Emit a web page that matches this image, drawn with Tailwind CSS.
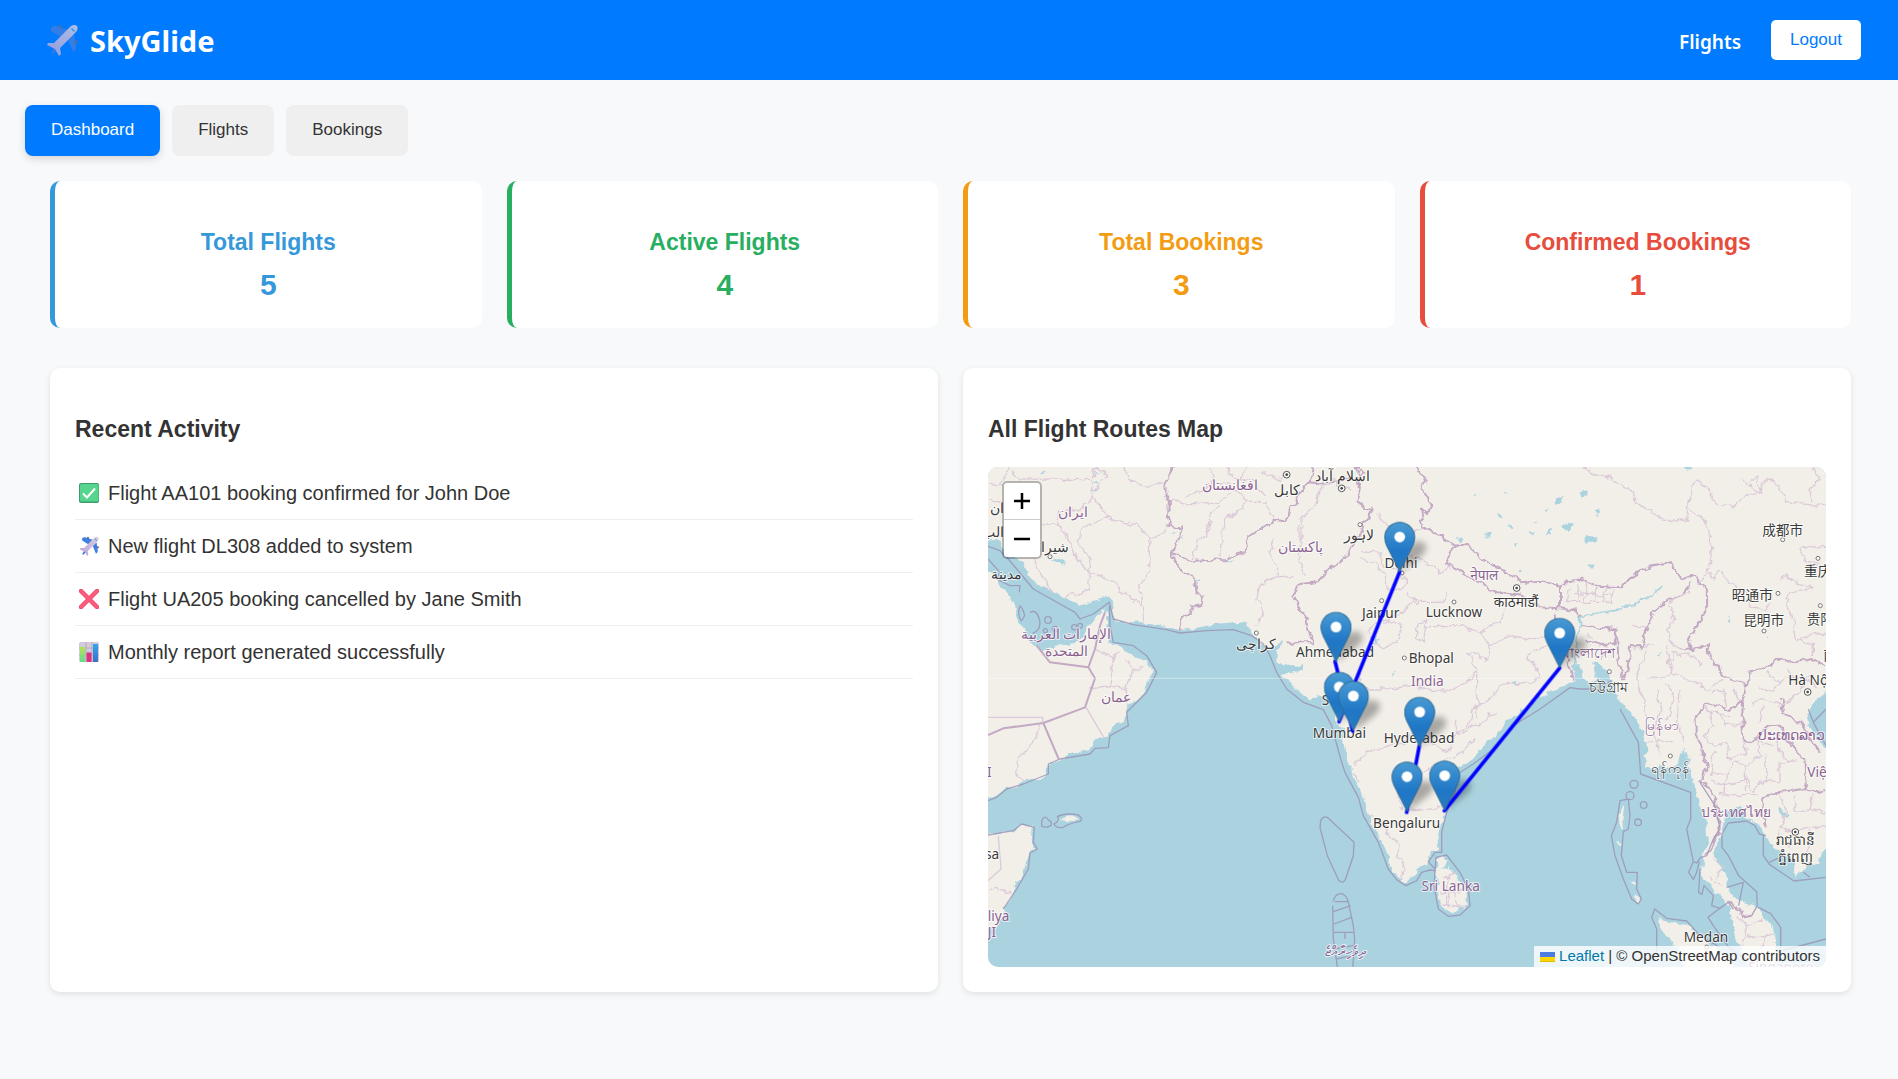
<!DOCTYPE html>
<html lang="en">
<head>
<meta charset="utf-8">
<meta name="viewport" content="width=device-width, initial-scale=1">
<title>SkyGlide</title>
<script src="https://cdn.jsdelivr.net/npm/@tailwindcss/browser@4"></script>
</head>
<body class="min-h-screen bg-[#f8f9fb] font-['Liberation_Sans',Arial,sans-serif] text-[#333]">

<svg class="absolute size-0" aria-hidden="true">
  <defs>
    <linearGradient id="fuselage" x1="0" y1="1" x2="1" y2="0"><stop offset="0" stop-color="#b9a3d6"/><stop offset="1" stop-color="#d9cfe0"/></linearGradient>
    <linearGradient id="pinFill" x1="0" y1="0" x2="0" y2="1"><stop offset="0" stop-color="#4a9bd3"/><stop offset=".6" stop-color="#1f77c6"/><stop offset="1" stop-color="#2a7bc0"/></linearGradient>
  </defs>
  <symbol id="plane" viewBox="0 0 32 32">
    <path fill="#3f7fe0" d="M5 4c1-2 3-2 5-2l12 4-6 8L5 7zM28 10l2 13c0 3-1 4-3 5l-5-12z"/>
    <path fill="#2f7fe8" d="M9 22l4 2-6 6-2-1z"/>
    <path fill="#5d6f9c" d="M13 1l3 1v3l-3-1zM31 16l1 3-3 1-1-3z"/>
    <path fill="url(#fuselage)" d="M24 3c3-3 6-2 7-1 1 2 1 4-2 7L14 24l1 6-2 2-4-7-8-4 1-2 6 0z"/>
    <path fill="#3d9be6" d="M26 4l3 3-1 1-3-3z"/>
  </symbol>
  <symbol id="pin" viewBox="0 0 25 41">
    <path fill="url(#pinFill)" stroke="#2e6c97" stroke-width=".8" d="M12.5.5C5.9.5.5 5.9.5 12.5c0 2.6 1 5.300 1.700 6.800L12.500 39.800l10.300-20.500c.7-1.500 1.700-4.200 1.700-6.800C24.500 5.900 19.100.5 12.500.5z"/>
    <circle cx="12.500" cy="12.200" r="4.300" fill="#fff"/>
  </symbol>
</svg>

<header class="flex h-20 items-center justify-between bg-[#007bff] px-[37px] font-['Noto_Sans','Open_Sans',sans-serif] text-white">
  <div class="flex items-center gap-3 pl-[9px]">
    <svg class="size-8 opacity-80" aria-hidden="true"><use href="#plane"/></svg>
    <span class="pt-0.5 text-[29px] leading-10 font-bold">SkyGlide</span>
  </div>
  <nav class="flex items-center gap-[30px]">
    <a href="#" class="pt-1 text-[19px] font-semibold">Flights</a>
    <button class="h-10 rounded-[5px] bg-white px-[19px] font-['Liberation_Sans',Arial,sans-serif] text-[17px] text-[#007bff]">Logout</button>
  </nav>
</header>

<div class="flex gap-3 px-[25px] pt-[25px]">
  <button class="h-[51px] rounded-lg bg-[#007bff] px-[26px] pb-0.5 text-[17px] text-white shadow-[0_3px_8px_rgba(0,0,0,0.15)]">Dashboard</button>
  <button class="h-[51px] rounded-lg bg-[#efefef] px-[26px] pb-0.5 text-[17px]">Flights</button>
  <button class="h-[51px] rounded-lg bg-[#efefef] px-[26px] pb-0.5 text-[17px]">Bookings</button>
</div>

<main class="pt-[25px] pr-[47px] pb-[50px] pl-[50px]">
  <section class="grid grid-cols-4 gap-[25px] text-center font-bold">
    <div class="rounded-[10px] border-l-[5px] border-[#3498db] bg-white px-[25px] pt-12 pb-[26px] text-[#3498db]">
      <h3 class="mb-3 text-[23px] leading-[27px]">Total Flights</h3>
      <p class="text-[30px] leading-[34px]">5</p>
    </div>
    <div class="rounded-[10px] border-l-[5px] border-[#27ae60] bg-white px-[25px] pt-12 pb-[26px] text-[#27ae60]">
      <h3 class="mb-3 text-[23px] leading-[27px]">Active Flights</h3>
      <p class="text-[30px] leading-[34px]">4</p>
    </div>
    <div class="rounded-[10px] border-l-[5px] border-[#f39c12] bg-white px-[25px] pt-12 pb-[26px] text-[#f39c12]">
      <h3 class="mb-3 text-[23px] leading-[27px]">Total Bookings</h3>
      <p class="text-[30px] leading-[34px]">3</p>
    </div>
    <div class="rounded-[10px] border-l-[5px] border-[#e74c3c] bg-white px-[25px] pt-12 pb-[26px] text-[#e74c3c]">
      <h3 class="mb-3 text-[23px] leading-[27px]">Confirmed Bookings</h3>
      <p class="text-[30px] leading-[34px]">1</p>
    </div>
  </section>

  <section class="mt-10 grid grid-cols-2 gap-[25px]">
    <div class="rounded-[10px] bg-white px-[25px] pt-12 pb-[25px] shadow-[0_2px_6px_rgba(0,0,0,0.1)]">
      <h3 class="mb-6 text-[23px] leading-[27px] font-bold">Recent Activity</h3>
      <ul class="text-xl leading-6">
        <li class="flex items-center gap-[9px] border-b border-[#eee] py-3.5 pl-1">
          <svg class="size-5" viewBox="0 0 20 20" aria-hidden="true"><rect width="20" height="20" rx="2" fill="#3f9a6c"/><rect x="1" y="1" width="18.500" height="17.500" rx="1.500" fill="#55d58e"/><path d="M4 10.500l4 4 8-9" fill="none" stroke="#fff" stroke-width="2"/></svg>
          <span>Flight AA101 booking confirmed for John Doe</span>
        </li>
        <li class="flex items-center gap-[9px] border-b border-[#eee] py-3.5 pl-1">
          <svg class="size-5" aria-hidden="true"><use href="#plane"/></svg>
          <span>New flight DL308 added to system</span>
        </li>
        <li class="flex items-center gap-[9px] border-b border-[#eee] py-3.5 pl-1">
          <svg class="size-5" viewBox="0 0 20 20" aria-hidden="true"><path d="M2 2l16 16M18 2L2 18" fill="none" stroke="#e8436b" stroke-width="4.500" stroke-linecap="round"/><path d="M2 2l16 16M18 2L2 18" fill="none" stroke="#ff5c7c" stroke-width="3" stroke-linecap="round"/></svg>
          <span>Flight UA205 booking cancelled by Jane Smith</span>
        </li>
        <li class="flex items-center gap-[9px] border-b border-[#eee] py-3.5 pl-1">
          <svg class="size-5" viewBox="0 0 20 20" aria-hidden="true"><defs><linearGradient id="barGreen" x1="0" y1="0" x2="0" y2="1"><stop offset="0" stop-color="#b4e34f"/><stop offset="1" stop-color="#63dc92"/></linearGradient><linearGradient id="barBlue" x1="0" y1="0" x2="0" y2="1"><stop offset="0" stop-color="#2fa8ee"/><stop offset="1" stop-color="#3f6fc4"/></linearGradient></defs><rect width="20" height="20" rx="1.500" fill="#d3cbdc"/><path d="M0 6h20M0 13h20M7 0v20M13 0v20" stroke="#b5abc2"/><rect x="1" y="5" width="5" height="15" fill="url(#barGreen)"/><rect x="7.500" y="10.500" width="5" height="9.500" fill="#e0317c"/><rect x="14" y="2" width="5" height="18" fill="url(#barBlue)"/></svg>
          <span>Monthly report generated successfully</span>
        </li>
      </ul>
    </div>

    <div class="rounded-[10px] bg-white px-[25px] pt-12 pb-[25px] shadow-[0_2px_6px_rgba(0,0,0,0.1)]">
      <h3 class="mb-6 text-[23px] leading-[27px] font-bold">All Flight Routes Map</h3>
      <div class="relative h-[500px] overflow-hidden rounded-[10px] bg-[#aad3df]">
        <svg class="block size-full font-['Noto_Sans','Noto_Sans_CJK_SC',sans-serif]" viewBox="24 24 2514 1500" preserveAspectRatio="xMidYMid slice" role="img" aria-label="Flight routes over South Asia">
          <defs>
            <filter id="rough" x="0" y="0" width="100%" height="100%"><feTurbulence type="fractalNoise" baseFrequency=".035" numOctaves="3" seed="4"/><feDisplacementMap in="SourceGraphic" scale="26" xChannelSelector="R" yChannelSelector="G"/></filter>
            <filter id="soft" x="-50%" y="-50%" width="200%" height="200%"><feGaussianBlur stdDeviation="9"/></filter>
          </defs>

          <g filter="url(#rough)">
            <!-- land -->
            <g fill="#f2efe9">
              <path d="M0 0H2560V700L2538 700 2510 722 2490 750 2480 770 2485 800 2510 840 2560 890V1170L2538 1170 2510 1210 2470 1230 2440 1250 2445 1210 2410 1180 2380 1170 2360 1130 2340 1095 2300 1080 2280 1040 2240 1060 2235 1090 2220 1130 2205 1180 2210 1210 2240 1250 2250 1305 2280 1330 2320 1340 2350 1370 2375 1400 2385 1440V1540H2310L2290 1490 2270 1440 2260 1390 2250 1350 2230 1320 2200 1290 2165 1260 2170 1200 2180 1150 2180 1090 2160 1040 2140 970 2125 900 2105 875 2090 920 2060 925 2030 920 1995 930 2000 850 1980 800 1940 750 1915 720 1895 670 1880 630 1860 625 1850 660 1830 675 1800 660 1775 670 1740 685 1700 700 1670 728 1620 755 1580 790 1550 830 1510 860 1480 905 1440 920 1415 950 1396 1000 1395 1050 1390 1080 1375 1130 1380 1175 1360 1180 1345 1200 1340 1220 1310 1230 1300 1255 1275 1270 1255 1255 1235 1230 1215 1170 1190 1120 1160 1060 1140 990 1115 940 1095 880 1085 810 1060 750 1050 700 1040 690 1030 715 990 718 950 695 920 665 905 645 930 640 965 630 970 615 920 620 890 600 890 580 910 550 870 560 850 555 830 535 815 520 800 490 740 495 680 500 600 515 560 500 480 492 410 485 395 455 400 430 385 415 340 425 300 440 240 410 215 395 160 370 145 345 130 305 90 295 60 250 0 250z"/>
              <path d="M0 320L24 330 60 380 85 410 105 440 115 490 140 530 165 560 190 572 250 562 300 545 330 500 365 455 385 455 380 500 390 545 430 570 470 590 510 620 520 640 495 680 480 720 445 740 435 790 400 800 385 835 340 845 325 875 290 880 235 900 205 920 195 950 130 970 80 990 45 1015 0 1020z"/>
              <path d="M0 1130L24 1128 100 1115 125 1097 158 1105 155 1150 165 1170 145 1185 140 1220 120 1260 100 1290 90 1320 70 1350 62 1390 35 1405 0 1430zM235 1080L262 1066 302 1078 270 1090z"/>
              <path d="M1368 1200L1392 1196 1430 1250 1460 1300 1460 1340 1410 1365 1380 1340 1370 1270z"/>
              <path d="M2035 1380L2080 1390 2130 1400 2180 1450 2240 1490 2270 1540H2120L2080 1450 2040 1415z"/>
              <path d="M1925 1040l10 0 -5 40 -8 30 -6 0zM1912 1150l6 0 0 14 -6 0zM1955 1265l8 0 0 12 -8 0zM1966 1310l10 0 0 20 -10 0z"/>
            </g>
            <!-- lakes, rivers and shallows -->
            <g fill="#aad3df">
              <path d="M180 40l15-2-4 8zM340 70l16-3 0 8zM335 90l14 2-6 6zM340 45l22-8-4 10zM220 298l18-4 20 14-8 12-14-10zM1730 120l24-10-8 20-14 6zM1745 200l20-14 18 10-14 22-20-4zM1820 232l34 0-14 16-20 0zM1822 318l24-6-12 18zM1640 215l24 4 0 12zM1430 238l20 0-8 10zM1690 225l30-18-8 22zM1510 225l22-6-6 16zM1550 170l14 0-4 8zM1480 100l12 0-8 8zM1605 255l10 4-6 8zM2110 24l34 0-20 8zM1845 160l14-6-4 18zM2035 588l10-6 0 8zM2395 1045l34 24-8 8-30-24z"/>
              <path d="M1395 1205l20-6-8 28-22 6zM1775 620l10 50 20 0-6-60zM1840 610l30 6 0 50-26-14z"/>
              <path d="M1235 644l12-6-6 16zM1600 670l10-5 3 14zM900 626l60-4 10 12-44 8z"/>
              <path d="M575 225l12-2-2 6zM600 235l16-4-6 8zM640 364l26-2 0 6zM625 350l16 0-2 5zM730 306l34-2-4 6zM474 398l14-2-4 8zM565 150l10 4-6 6zM1570 95l12 4-4 6zM1690 150l14-2-8 8zM1660 190l12-4 0 8zM1800 100l20-6 4 12-18 6zM1585 205l14-4 0 6zM1620 330l5 12-6 0zM2245 470l6 14-6 4zM2355 528l6 10-6 6zM1190 535l10 6-8 10z"/>
            </g>
            <path fill="none" stroke="#aad3df" stroke-width="5" d="M1800 470q100-14 130-20t120-66M1800 470q-4 80-14 150M1900 770q20 30 30 60M2110 870q4 60 22 120"/>

            <!-- country borders -->
            <g fill="none" stroke="#c3a9c3" stroke-width="6" stroke-linejoin="round">
              <path d="M575 24L570 45 555 70 560 110 570 125 565 200 605 205 600 240 570 280 640 305 740 300 800 275 805 230 850 205 880 185 920 190 930 150 960 100 985 70 1000 24M570 280L600 330 645 360 650 400 668 410 665 435 635 440 630 465 605 480 598 520"/>
              <path d="M1130 60L1140 100 1130 130 1180 155 1150 190 1140 230 1090 300 1050 330 1010 370 960 375 940 410 960 450 980 480 1000 550 920 550M1130 60L1150 40 1130 24M1130 24L1140 90M985 70Q1060 80 1110 60M1310 24L1335 60 1325 90 1360 140 1345 165 1320 155 1330 200 1380 230 1425 260 1395 310 1440 340 1500 370 1550 400 1620 410 1680 445 1740 448M1425 260L1460 255 1500 290 1560 330 1620 370 1680 365 1740 380 1740 448M1740 380L1760 370 1800 365 1850 380 1920 385 1960 345 2010 320 2070 310 2090 335 2110 360 2135 350 2160 370 2180 400 2182 450 2150 500 2130 545 2135 570M1740 448L1790 458 1800 470"/>
              <path d="M1730 460L1735 530 1760 560 1765 620 1780 665M1800 498L1880 510 1910 515 1900 560 1860 560 1810 545M1910 515L1915 600 1925 655 1945 640 1950 565 1985 565 2000 510 2020 460 2060 425 2110 405 2130 370"/>
              <path d="M2110 575L2185 560 2190 600 2215 620 2225 650 2300 680 2310 640 2345 630 2400 600 2440 610 2500 600 2538 620M2300 680L2290 730 2250 750 2180 730 2150 770 2150 840 2170 880 2180 920 2160 960 2200 1010 2220 1100 2200 1150 2180 1190M2290 730L2285 770 2290 840 2310 850 2370 800 2400 800 2440 870 2470 900 2475 990 2390 1000 2350 1020 2345 1070 2360 1100M2400 720L2410 760 2460 790 2520 880M2475 990L2510 1000 2538 990M2245 1330L2280 1350 2290 1375 2315 1370"/>
            </g>

            <!-- state and province borders -->
            <g fill="none" stroke="#dccad9" stroke-width="4" stroke-linejoin="round">
              <path d="M60 70L90 24M100 24L110 55 150 60 340 62 345 24M340 62L335 110 385 175 300 210 295 250 330 300 325 340 400 360 420 400 490 445 495 495M335 110L300 150 235 160 235 195 190 195M235 195L270 245 290 300 330 340 330 390 250 415M385 175L470 200 510 245 505 340 480 380 485 440M510 245L565 210M435 24L440 60 500 80 550 75M24 70L70 75M24 125L70 125M160 300L190 350 215 400M345 24Q390 40 370 70L340 95"/>
              <path d="M610 110L670 100 700 60 690 24M700 60L760 90 800 130 770 165 740 170 730 220 722 295M720 140L690 165 680 230 650 250 640 300M800 130L860 130 880 180M570 125L620 135 720 130 750 100M830 500L850 460 830 420 840 380 880 355 940 350M900 350L870 280 880 240M960 250L960 180 1010 140 1020 90 1060 60 1080 90 1110 90M850 40L890 60 930 40M780 60L800 24M740 24L770 60 820 70 860 110M970 200L960 280 970 350"/>
              <path d="M1190 160L1220 200 1300 215 1330 205M1140 275L1200 280 1210 320 1260 340 1280 370 1250 400 1215 385 1220 350 1180 310 1140 300M1260 280L1320 300 1380 340 1420 320M1280 400L1310 425 1250 470 1210 490M1310 430L1390 430 1400 400M1160 520L1210 480 1265 500 1250 550 1210 570 1180 540 1160 520M1310 500L1340 480 1330 550 1310 540zM1340 500L1440 500 1500 520 1530 560 1520 600 1460 580M1500 520L1560 490 1580 440M1530 560L1590 530 1650 540 1730 520M1460 580L1490 630 1490 690 1490 780M1130 640L1160 690 1230 690 1300 680 1380 700 1450 680 1490 640M1140 660L1150 690M1640 590L1700 560 1735 560M1640 590L1660 620 1680 655 1640 670 1560 680 1530 720 1480 745 1470 800 1420 830 1400 880 1350 850 1300 780"/>
              <path d="M1120 920L1160 880 1230 860 1280 850M1280 850L1330 780 1340 740M1120 940L1140 970M1250 920L1300 950 1400 900 1450 880 1480 840M1260 1050L1310 1055 1380 1045 1395 1030M1220 1120L1260 1160 1250 1190 1270 1210 1265 1260M1160 1070L1210 1090 1230 1130M1250 1000L1270 1050M1420 780L1440 830 1500 790 1550 760"/>
              <path d="M1390 1260L1430 1240M1380 1300L1450 1290M1400 1250L1400 1340M1430 1260L1420 1300 1440 1350M1385 1335L1455 1345M1410 1300L1405 1345"/>
              <path d="M1800 24L1900 60 1960 100 1970 130 2030 170 2060 185 2120 180 2130 80 2160 65 2210 130 2260 145 2300 110 2340 90 2370 60 2400 90 2420 130 2460 135 2538 140M2130 150L2170 180 2190 220 2195 330M2160 370L2190 330 2200 360 2220 335 2250 370 2300 410 2310 440 2360 450 2370 430M2280 60L2340 100 2330 50 2310 70M2400 360L2420 345 2440 370 2500 385 2430 400 2420 430 2440 490 2450 540 2500 560 2500 590M2460 270L2538 265M2460 270L2480 310 2538 320M2450 540L2538 520M2500 24L2520 60 2490 90 2500 130"/>
              <path d="M1770 385L1760 420 1780 430M1790 375L1800 430M1820 370L1815 430M1850 385L1840 430M1880 385L1870 430M1780 400L1895 410M1775 430L1895 430 1895 390"/>
              <path d="M2070 430L2090 410 2130 400M2070 430L2085 480 2060 520 2080 560 2110 570M2080 580L2140 590 2160 620M2080 580L2070 650 2000 660M1985 565L2020 560M1960 500L2000 500M1860 600L1880 560M1820 520L1840 540M2000 560L1970 660 1990 720 2000 780M2060 560L2070 640 2120 660 2180 690 2230 660M2030 690L2040 760 2020 820 2040 890M2060 670L2080 720 2060 780M2100 700L2090 790 2110 850M2000 850L2040 840 2080 850"/>
              <path d="M2180 740L2200 800 2170 830 2200 860 2240 850 2250 900 2300 880 2290 840M2210 760L2240 800 2290 790M2200 880L2190 940 2240 950 2260 910 2300 920 2340 890 2330 840 2380 860M2190 960L2240 980 2300 960 2320 1000 2350 960 2400 970 2400 910 2450 900M2220 1000L2280 1010 2340 1010M2240 950L2230 1010M2290 920L2300 1000M2350 890L2360 960M2400 820L2390 870 2430 910M2320 740L2350 720 2400 740 2460 700 2480 660 2440 650 2400 670 2360 640M2340 690L2380 700 2400 670M2420 630L2450 660 2500 650M2480 660L2510 690M2180 760L2250 770M2230 690L2240 740M2260 690L2270 735M2190 700L2240 705M2350 740L2340 790"/>
              <path d="M2400 1010L2420 1060 2400 1100 2440 1120 2500 1100 2538 1110M2440 1010L2450 1060 2500 1050 2538 1060M2400 1100L2390 1150M2440 1120L2430 1170M2490 1110L2480 1200M2500 1010L2490 1050M2200 1200L2230 1220 2215 1260M2190 1260L2230 1280M2270 1370L2300 1400 2350 1380M2300 1400L2290 1460M2300 1430L2350 1440 2380 1420M2350 1440L2340 1500"/>
              <path d="M180 800L160 860 112 900 108 950 135 970M345 570L400 600 385 680 440 690 460 630 440 600M400 600L420 580M440 690L450 740M460 630L490 625M24 1300L65 1288 92 1300M330 690L385 680"/>
            </g>
          </g>

          <!-- surveyed borders that run straight -->
          <path d="M24 828L70 808 190 792 315 745 345 658 325 625 210 610 170 560M190 792L236 900M325 625L345 570 360 500 375 460" fill="none" stroke="#c3a9c3" stroke-width="6" stroke-linejoin="round"/>
          <path d="M24 775H188V790M318 745L373 838M55 1130L63 1230 24 1265" fill="none" stroke="#dccad9" stroke-width="4"/>

          <!-- maritime limits -->
          <g fill="none" stroke="#9a92b5" stroke-width="4" stroke-linejoin="round" opacity=".8">
            <path d="M24 262L60 275 85 300 110 330 160 390 240 435 285 460 300 480 340 465 388 430 400 480 460 497 560 512 600 522 680 515 760 512 815 530 850 555 870 590 890 640 920 690 970 730 1030 752 1055 800 1082 900 1095 940 1135 1015 1150 1070 1195 1150 1225 1230 1250 1262 1278 1280 1310 1265 1325 1240 1350 1233 1368 1235"/>
            <path d="M1365 1230L1345 1208 1365 1180 1385 1180 1385 1120 1400 1060 1425 1000 1432 945 1480 915 1540 870 1600 800 1680 750 1770 686 1800 690 1850 690 1895 665"/>
            <path d="M1368 1195L1400 1188 1440 1240 1465 1290 1470 1340 1440 1368 1405 1372 1375 1350 1362 1280zM1022 1085Q1030 1070 1042 1075L1122 1150 1120 1190 1096 1262Q1088 1276 1076 1264L1042 1190 1020 1105zM1060 1328Q1064 1306 1080 1304T1104 1325L1120 1400 1124 1440 1118 1530M1073 1530L1060 1440 1058 1340M1065 1328H1105M1060 1358L1112 1340M1062 1395L1115 1375M1062 1420H1120M1095 1420V1440M1060 1470L1120 1460M1068 1500L1118 1490"/>
            <path d="M1920 750L1975 850 1982 945 2132 1000 2132 1080 2120 1110 2140 1208 2150 1212 2162 1195 2180 1190 2200 1140 2220 1110 2205 1040 2160 970M2140 1208L2126 1240 2140 1262 2150 1240 2158 1208M2160 1230L2156 1300 2166 1306 2172 1280 2200 1310 2195 1340 2220 1348 2245 1330 2260 1350"/>
            <path d="M2245 1092L2226 1125 2226 1165 2245 1190 2276 1250 2330 1298 2332 1340 2315 1370M2245 1092L2300 1086 2325 1100 2338 1125 2358 1130M2350 1130L2350 1190 2368 1216 2442 1266 2538 1255M2368 1210L2410 1190M2240 1285L2290 1270 2276 1340M2470 1240L2490 1255M2335 1345L2372 1364 2402 1405 2402 1470M2402 1476L2538 1440M2230 1340L2184 1375 2200 1400 2250 1470 2300 1500"/>
            <path d="M2030 1480V1410L2015 1375 2024 1350 2060 1378 2120 1386 2160 1430 2220 1465M2485 750L2500 790 2538 860M2500 790L2538 750"/>
            <path d="M1920 1025L1945 1020 1950 1070 1945 1110 1930 1118 1924 1190 1940 1240 1972 1240 1970 1290 1984 1320 1975 1335 1955 1320 1930 1260 1905 1190 1894 1130 1910 1090z"/>
            <circle cx="1962" cy="976" r="12"/><circle cx="1950" cy="1010" r="12"/><circle cx="1991" cy="1038" r="10"/><circle cx="1974" cy="1090" r="10"/>
            <path d="M24 300L60 340 50 360 90 380 120 380 118 400M120 440q10 10 14 30l-10 16q-14-20-4-46M150 460q20-10 28 20t-20 44M24 1025L50 1015 80 990 130 975 205 945 205 915 240 900 330 885 345 868 385 866 390 830 445 800 440 760 500 700 530 640 500 590 460 560 400 550 390 500 388 440"/>
            <path d="M24 1128L100 1115 125 1095 163 1105 160 1150 172 1170 150 1182 145 1230 110 1290 90 1320 70 1350M185 1085q10-20 20-2 12 4 8 16-14 10-28 2zM222 1095q20-12 10-22 20-12 60-6 20 12 8 20-40 8-50 18-20 4-28-10z"/>
            <circle cx="204" cy="483" r="10"/><circle cx="225" cy="510" r="8"/><circle cx="283" cy="505" r="8"/><circle cx="196" cy="515" r="6"/><circle cx="300" cy="500" r="7"/>
          </g>

          <path d="M24 658H2538" stroke="#fff" stroke-width="3" opacity=".4"/>

          <!-- town dots -->
          <g fill="#fff" stroke="#777" stroke-width="3">
            <circle cx="210" cy="293" r="6"/><circle cx="829" cy="522" r="6"/><circle cx="1140" cy="197" r="6"/><circle cx="1205" cy="425" r="6"/><circle cx="1422" cy="429" r="6"/><circle cx="1273" cy="597" r="6"/><circle cx="1266" cy="342" r="6"/><circle cx="1888" cy="638" r="6"/><circle cx="2408" cy="242" r="6"/><circle cx="2514" cy="298" r="6"/><circle cx="2394" cy="403" r="6"/><circle cx="2521" cy="440" r="6"/><circle cx="2352" cy="516" r="6"/><circle cx="2071" cy="891" r="6"/><circle cx="2180" cy="1464" r="6"/>
          </g>
          <g fill="#fff" stroke="#555" stroke-width="3">
            <circle cx="920" cy="47" r="10"/><circle cx="1085" cy="88" r="10"/><circle cx="1610" cy="387" r="10"/><circle cx="2483" cy="699" r="10"/><circle cx="2446" cy="1119" r="10"/>
          </g>
          <g fill="#444"><circle cx="920" cy="47" r="4"/><circle cx="1085" cy="88" r="4"/><circle cx="1610" cy="387" r="4"/><circle cx="2483" cy="699" r="4"/><circle cx="2446" cy="1119" r="4"/></g>

          <!-- city labels -->
          <g fill="#3a3a3a" stroke="#fff" stroke-opacity=".7" stroke-width="6" stroke-linejoin="round" paint-order="stroke" font-size="41" text-anchor="middle">
            <text x="50" y="162">ان</text><text x="40" y="234">الب</text>
            <text x="214" y="278">شیراز</text><text x="80" y="360">مدينة</text><text x="828" y="570">کراچی</text>
            <text x="920" y="108">کابل</text><text x="1087" y="66">اسلام آباد</text><text x="1138" y="242">لاہور</text>
            <text x="1263" y="326">Delhi</text><text x="1202" y="476">Jaipur</text><text x="1422" y="474">Lucknow</text>
            <text x="1065" y="593">Ahmedabad</text><text x="1354" y="613">Bhopal</text><text x="1076" y="738">Surat</text>
            <text x="1608" y="444">काठमाडौं</text><text x="1886" y="699">চট্টগ্রাম</text>
            <text x="2408" y="227">成都市</text><text x="2513" y="350">重庆</text><text x="2317" y="423">昭通市</text><text x="2351" y="498">昆明市</text><text x="2521" y="494">贵阳</text><text x="2550" y="602">南</text>
            <text x="2490" y="678">Hà Nội</text>
            <text x="1078" y="836">Mumbai</text><text x="1317" y="851">Hyderabad</text><text x="1280" y="1107">Bengaluru</text>
            <text x="2072" y="942">ရန်ကုန်</text><text x="2445" y="1157">រាជធានី</text><text x="2445" y="1208">ភ្នំពេញ</text>
            <text x="2178" y="1450">Medan</text><text x="36" y="1199">sa</text>
          </g>
          <!-- country labels -->
          <g fill="#8a6391" stroke="#fff" stroke-opacity=".7" stroke-width="6" stroke-linejoin="round" paint-order="stroke" font-size="41" text-anchor="middle">
            <text x="750" y="92">افغانستان</text><text x="280" y="175">ایران</text>
            <text x="258" y="540">الإمارات العربية</text><text x="258" y="590">المتحدة</text><text x="408" y="729">عمان</text>
            <text x="960" y="280">پاکستان</text><text x="1342" y="682">India</text><text x="1513" y="363">नेपाल</text><text x="1824" y="598">বাংলাদেশ</text>
            <text x="1412" y="1296">Sri Lanka</text><text x="1094" y="1490">ދިވެހިރާއްޖެ</text>
            <text x="2045" y="812">မြန်မာ</text><text x="2435" y="842">ປະເທດລາວ</text><text x="2570" y="953">Việt Nam</text><text x="2268" y="1074">ประเทศไทย</text>
            <text x="2402" y="1538">Singapore</text><text x="56" y="1386">liya</text><text x="36" y="1435">JI</text><text x="28" y="953">I</text>
          </g>

          <!-- pin shadows -->
          <g fill="#000" opacity=".3" filter="url(#soft)">
            <path id="shade" d="M1262 338L1275 270Q1300 240 1330 250 1350 265 1325 290z"/>
            <use href="#shade" x="-191" y="270"/><use href="#shade" x="-181" y="450"/><use href="#shade" x="-139" y="477"/><use href="#shade" x="60" y="525"/><use href="#shade" x="480" y="288"/><use href="#shade" x="22" y="718"/><use href="#shade" x="135" y="715"/>
          </g>
          <!-- routes -->
          <path d="M1259 338L1077 788M1065 607L1118 816M1318 860L1280 1060M1739 627L1393 1055" fill="none" stroke="#0000ff" stroke-width="11" stroke-linecap="round"/>
          <!-- airports -->
          <use href="#pin" x="1212" y="188" width="94" height="154"/>
          <use href="#pin" x="1021" y="458" width="94" height="154"/>
          <use href="#pin" x="1692" y="476" width="94" height="154"/>
          <use href="#pin" x="1031" y="638" width="94" height="154"/>
          <use href="#pin" x="1073" y="665" width="94" height="154"/>
          <use href="#pin" x="1272" y="713" width="94" height="154"/>
          <use href="#pin" x="1347" y="904" width="94" height="154"/>
          <use href="#pin" x="1234" y="907" width="94" height="154"/>
        </svg>

        <div class="absolute top-3.5 left-3.5 flex flex-col overflow-hidden rounded-[5px] border-2 border-black/25 bg-white bg-clip-padding">
          <button aria-label="Zoom in" class="flex h-[37px] w-9 items-center justify-center border-b border-[#ccc]"><svg class="size-4" viewBox="0 0 16 16"><path d="M8 0v16M0 8h16" stroke="#000" stroke-width="2.500"/></svg></button>
          <button aria-label="Zoom out" class="flex h-[37px] w-9 items-center justify-center"><svg class="size-4" viewBox="0 0 16 16"><path d="M0 8h16" stroke="#000" stroke-width="2.500"/></svg></button>
        </div>

        <div class="absolute right-0 bottom-0 flex h-[21px] items-center bg-white/80 px-1.5 text-[15px] whitespace-pre">
          <a href="#" class="flex items-center gap-1 text-[#0078a8]"><svg class="h-2.5 w-[15px]" viewBox="0 0 15 10" aria-hidden="true"><path fill="#4c7be1" d="M0 0h15v5H0z"/><path fill="#ffd500" d="M0 5h15v5H0z"/><path fill="#e0bc00" d="M0 9h15v1H0z"/></svg>Leaflet</a><span> | © OpenStreetMap contributors</span>
        </div>
      </div>
    </div>
  </section>
</main>
</body>
</html>
